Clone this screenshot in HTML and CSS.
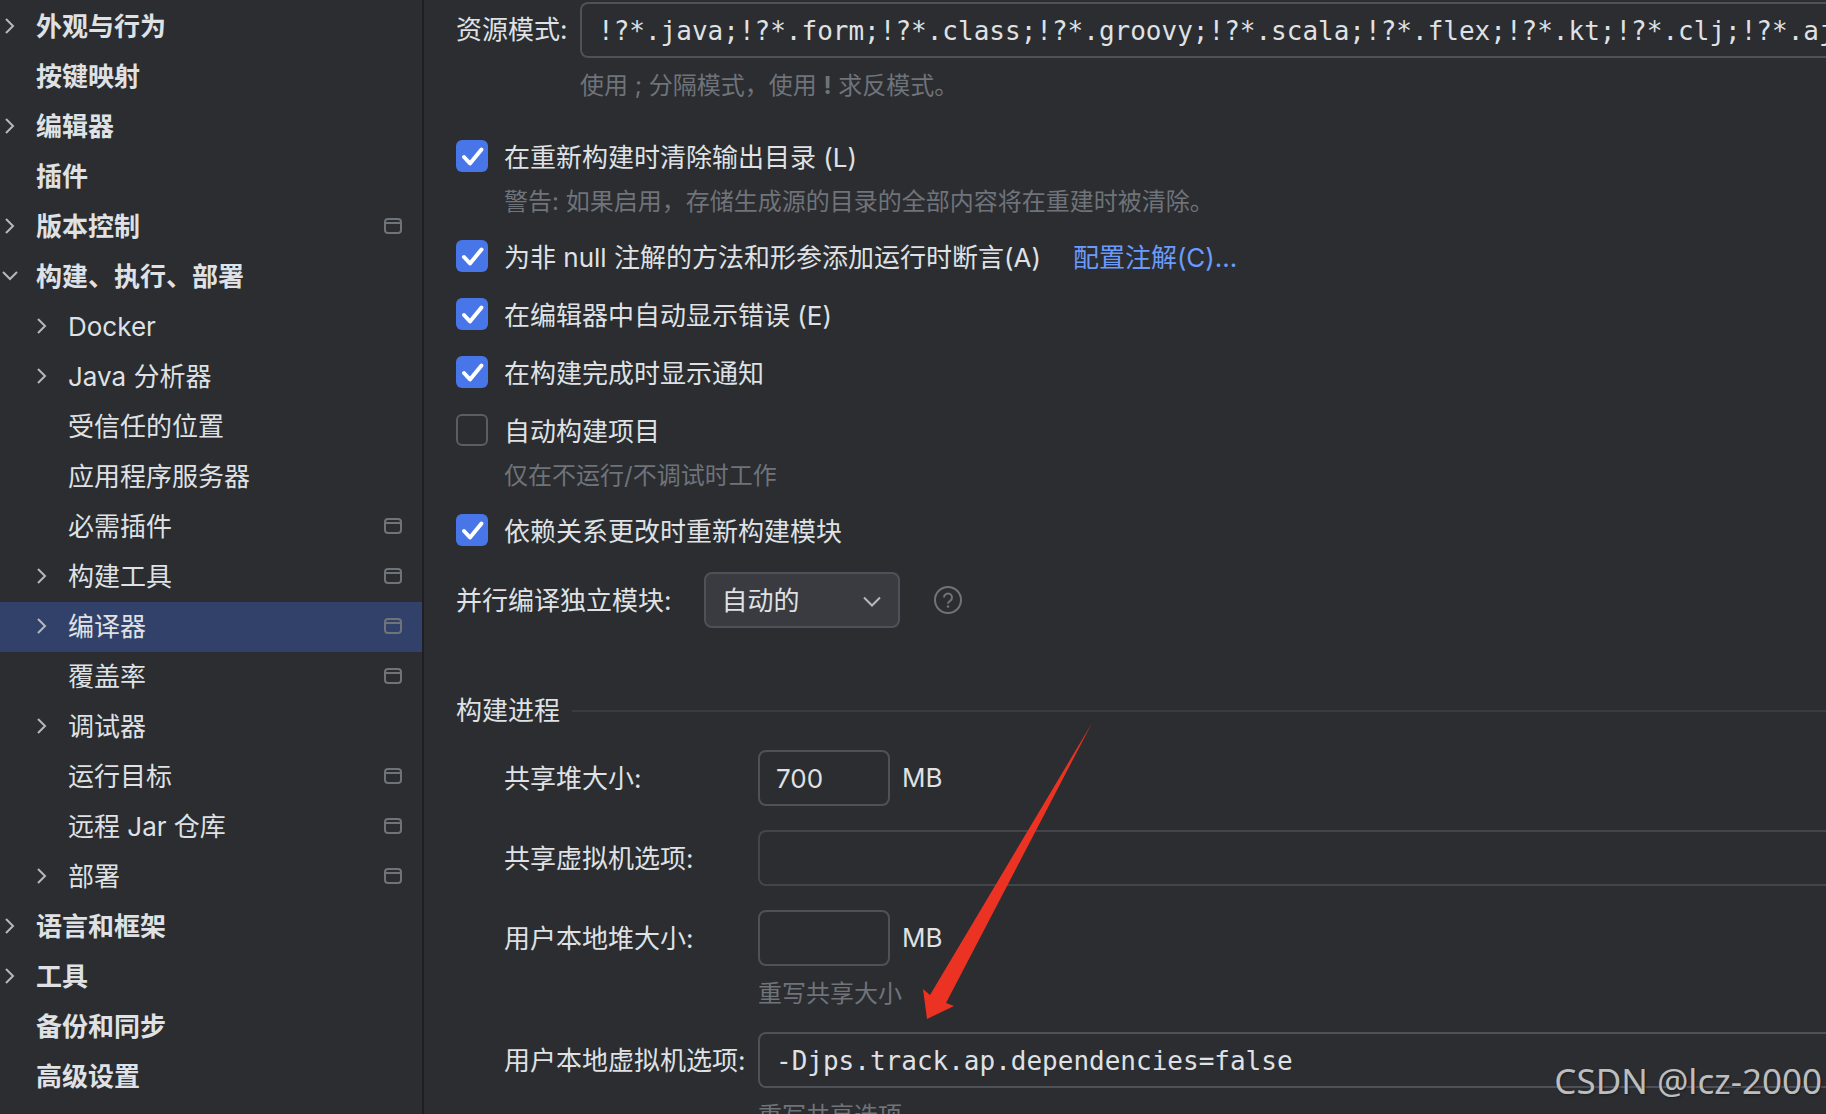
FILE: index.html
```html
<!DOCTYPE html>
<html lang="zh-CN">
<head>
  <meta charset="UTF-8">
  <meta name="viewport" content="width=device-width, initial-scale=1">
  <title>设置 - 编译器</title>
  <link rel="stylesheet" href="styles.css">
</head>
<body>

  <svg class="sprite" aria-hidden="true">
    <symbol id="right" viewBox="0 0 20 20"><path d="M6 3l7 7-7 7" /></symbol>
    <symbol id="down" viewBox="0 0 20 20"><path d="M3 6l7 7 7-7" /></symbol>
    <symbol id="project" viewBox="0 0 20 20"><rect x="3" y="3" width="16" height="14" rx="3" /><path d="M3 7h16" /></symbol>
  </svg>

  <div class="settings">
    <nav class="sidebar">
      <ul class="tree">
        <li><a href="#"><svg class="arrow"><use href="#right"/></svg><span>外观与行为</span></a></li>
        <li><a href="#"><svg class="arrow"></svg><span>按键映射</span></a></li>
        <li><a href="#"><svg class="arrow"><use href="#right"/></svg><span>编辑器</span></a></li>
        <li><a href="#"><svg class="arrow"></svg><span>插件</span></a></li>
        <li><a href="#"><svg class="arrow"><use href="#right"/></svg><span>版本控制</span><svg class="badge"><use href="#project"/></svg></a></li>
        <li>
          <a href="#"><svg class="arrow"><use href="#down"/></svg><span>构建、执行、部署</span></a>
          <ul class="subtree">
            <li><a href="#"><svg class="arrow"><use href="#right"/></svg><span>Docker</span></a></li>
            <li><a href="#"><svg class="arrow"><use href="#right"/></svg><span>Java 分析器</span></a></li>
            <li><a href="#"><svg class="arrow"></svg><span>受信任的位置</span></a></li>
            <li><a href="#"><svg class="arrow"></svg><span>应用程序服务器</span></a></li>
            <li><a href="#"><svg class="arrow"></svg><span>必需插件</span><svg class="badge"><use href="#project"/></svg></a></li>
            <li><a href="#"><svg class="arrow"><use href="#right"/></svg><span>构建工具</span><svg class="badge"><use href="#project"/></svg></a></li>
            <li><a href="#" class="selected"><svg class="arrow"><use href="#right"/></svg><span>编译器</span><svg class="badge"><use href="#project"/></svg></a></li>
            <li><a href="#"><svg class="arrow"></svg><span>覆盖率</span><svg class="badge"><use href="#project"/></svg></a></li>
            <li><a href="#"><svg class="arrow"><use href="#right"/></svg><span>调试器</span></a></li>
            <li><a href="#"><svg class="arrow"></svg><span>运行目标</span><svg class="badge"><use href="#project"/></svg></a></li>
            <li><a href="#"><svg class="arrow"></svg><span>远程 Jar 仓库</span><svg class="badge"><use href="#project"/></svg></a></li>
            <li><a href="#"><svg class="arrow"><use href="#right"/></svg><span>部署</span><svg class="badge"><use href="#project"/></svg></a></li>
          </ul>
        </li>
        <li><a href="#"><svg class="arrow"><use href="#right"/></svg><span>语言和框架</span></a></li>
        <li><a href="#"><svg class="arrow"><use href="#right"/></svg><span>工具</span></a></li>
        <li><a href="#"><svg class="arrow"></svg><span>备份和同步</span></a></li>
        <li><a href="#"><svg class="arrow"></svg><span>高级设置</span></a></li>
      </ul>
    </nav>

    <main class="content">
      <div class="patterns">
        <label for="patterns">资源模式:</label>
        <input type="text" id="patterns" class="field wide" value="!?*.java;!?*.form;!?*.class;!?*.groovy;!?*.scala;!?*.flex;!?*.kt;!?*.clj;!?*.aj">
        <p class="hint">使用 ; 分隔模式，使用 <b>!</b> 求反模式。</p>
      </div>

      <div class="options">
        <div class="option">
          <input type="checkbox" id="clear" checked>
          <label for="clear">在重新构建时清除输出目录 (L)</label>
          <p class="hint">警告: 如果启用，存储生成源的目录的全部内容将在重建时被清除。</p>
        </div>
        <div class="option">
          <input type="checkbox" id="notnull" checked>
          <div class="with-link">
            <label for="notnull">为非 null 注解的方法和形参添加运行时断言(A)</label>
            <a href="#">配置注解(C)...</a>
          </div>
        </div>
        <div class="option">
          <input type="checkbox" id="errors" checked>
          <label for="errors">在编辑器中自动显示错误 (E)</label>
        </div>
        <div class="option">
          <input type="checkbox" id="notify" checked>
          <label for="notify">在构建完成时显示通知</label>
        </div>
        <div class="option">
          <input type="checkbox" id="auto">
          <label for="auto">自动构建项目</label>
          <p class="hint">仅在不运行/不调试时工作</p>
        </div>
        <div class="option">
          <input type="checkbox" id="deps" checked>
          <label for="deps">依赖关系更改时重新构建模块</label>
        </div>
      </div>

      <div class="parallel">
        <label for="parallel">并行编译独立模块:</label>
        <select id="parallel">
          <option>自动的</option>
        </select>
        <button type="button" class="help" aria-label="帮助">
          <svg viewBox="0 0 28 28">
            <circle cx="14" cy="14" r="13" />
            <path d="M10 11.500a4 4 0 1 1 6.200 3.300c-1.400.9-2.200 1.500-2.200 3" />
            <circle class="dot" cx="14" cy="20.500" r="1.300" />
          </svg>
        </button>
      </div>

      <h2 class="section">构建进程</h2>

      <div class="process">
        <label for="heap">共享堆大小:</label>
        <div class="size"><input type="text" id="heap" class="field small" value="700"><span>MB</span></div>

        <label for="vm">共享虚拟机选项:</label>
        <input type="text" id="vm" class="field wide dim">

        <label for="userheap">用户本地堆大小:</label>
        <div class="size"><input type="text" id="userheap" class="field small"><span>MB</span></div>
        <p class="hint">重写共享大小</p>

        <label for="uservm">用户本地虚拟机选项:</label>
        <input type="text" id="uservm" class="field wide" value="-Djps.track.ap.dependencies=false">
        <p class="hint">重写共享选项</p>

        <!-- arrow pointing at the user-local VM options -->
        <svg class="pointer" viewBox="0 0 170 296" aria-hidden="true">
          <path d="M170 0L24 280l8 3-27 13-4-30 7 6z" />
        </svg>
      </div>
    </main>

    <div class="watermark">CSDN @lcz-2000</div>
  </div>

</body>
</html>
```
FILE: styles.css
```css
* { box-sizing: border-box; }

body {
  margin: 0;
  background-color: #2b2d30;
  color: #dfe1e5;
  font-family: Inter, "Noto Sans CJK SC", sans-serif;
  font-size: 26px;
  line-height: 32px;
}

ul, p, h2 { margin: 0; padding: 0; }
ul { list-style: none; }
svg { fill: none; stroke: currentColor; stroke-width: 2; }
.sprite { display: none; }

.settings { position: relative; display: flex; height: 100vh; overflow: hidden; }

/* sidebar */
.sidebar { flex: 0 0 424px; padding-top: 2px; border-right: 2px solid #1e1f22; }
.tree a {
  display: flex;
  align-items: center;
  gap: 16px;
  height: 50px;
  padding: 0 20px 2px 0;
  color: inherit;
  font-weight: 700;
  text-decoration: none;
}
.tree span { padding-top: 2px; }
.tree .subtree a { padding-left: 32px; font-weight: 400; }
.tree .selected { background-color: #32416a; }
.arrow, .badge { flex: none; width: 20px; height: 20px; }
.arrow { color: #b4b8bf; }
.badge { margin-left: auto; color: #6f737a; }

/* content */
.content { flex: 1; min-width: 0; padding: 2px 0 0 32px; }
.hint { color: #6f737a; font-size: 24px; }

.field {
  width: 100%;
  height: 56px;
  padding: 0 16px;
  border: 2px solid #4e5157;
  border-radius: 8px;
  outline: 0;
  background-color: transparent;
  color: inherit;
  font: inherit;
}
.field.wide {
  padding: 2px 0 0 16px;
  border-right: 0;
  border-radius: 8px 0 0 8px;
  font-family: "DejaVu Sans Mono", monospace;
}
.field.small { width: 132px; }
.field.dim { border-color: #43454a; }

.patterns {
  display: grid;
  grid-template-columns: 112px 1fr;
  column-gap: 12px;
  row-gap: 12px;
  align-items: center;
}
.patterns .hint { grid-column: 2; }

.options { display: flex; flex-direction: column; gap: 24px; margin-top: 38px; }
.option {
  display: grid;
  grid-template-columns: 32px 1fr;
  column-gap: 16px;
  row-gap: 12px;
}
.option label, .with-link a { padding-top: 2px; }
.option .hint { grid-column: 2; margin-bottom: -2px; }
.with-link { display: flex; gap: 32px; }
.with-link label { padding-top: 0; }
.with-link { padding-top: 2px; }
.with-link a { padding-top: 0; color: #6b9bfa; text-decoration: none; }

input[type="checkbox"] {
  appearance: none;
  width: 32px;
  height: 32px;
  margin: 0;
  border: 2px solid #5a5d63;
  border-radius: 6px;
}
input[type="checkbox"]:checked {
  border: 0;
  background: #4876e8 url("data:image/svg+xml,%3Csvg xmlns='http://www.w3.org/2000/svg' viewBox='0 0 32 32'%3E%3Cpath d='M8 17l6 6.500L25.500 9.500' fill='none' stroke='white' stroke-width='4' stroke-linecap='round' stroke-linejoin='round'/%3E%3C/svg%3E");
}

.parallel { display: flex; align-items: center; gap: 32px; margin-top: 24px; }
.parallel label { padding-top: 2px; }
select {
  appearance: none;
  width: 196px;
  height: 56px;
  padding: 2px 16px 0;
  border: 2px solid #4e5157;
  border-radius: 8px;
  background: #393b40 url("data:image/svg+xml,%3Csvg xmlns='http://www.w3.org/2000/svg' viewBox='0 0 20 20'%3E%3Cpath d='M2 7.500l8 8 8-8' fill='none' stroke='%23b4b8bf' stroke-width='2'/%3E%3C/svg%3E") no-repeat right 16px center / 20px;
  color: inherit;
  font: inherit;
}
.help { width: 28px; height: 28px; margin-left: 2px; padding: 0; border: 0; background: none; color: #6f737a; }
.help svg { display: block; }
.help .dot { fill: currentColor; stroke: none; }

.section {
  display: flex;
  align-items: center;
  gap: 12px;
  margin-top: 66px;
  font-size: 26px;
  font-weight: 400;
  line-height: 34px;
}
.section::after { content: ""; flex: 1; height: 2px; background-color: #393b40; }

.process {
  position: relative;
  display: grid;
  grid-template-columns: 242px 1fr;
  column-gap: 12px;
  row-gap: 24px;
  align-items: center;
  margin-top: 22px;
  padding-left: 48px;
}
.process label { padding-top: 2px; white-space: nowrap; }
.process .hint { grid-column: 2; margin: -12px 0 -2px; }
.size { display: flex; align-items: center; gap: 12px; }

.pointer {
  position: absolute;
  left: 466px;
  top: -27px;
  width: 170px;
  height: 296px;
  fill: #ec3323;
  stroke: none;
}

.watermark {
  position: absolute;
  right: 4px;
  bottom: 12px;
  color: #bcbdbe;
  font-family: "Noto Sans", sans-serif;
  font-size: 35px;
  line-height: 42px;
  text-shadow: 1px 1px 2px #1e1f22;
}
```
